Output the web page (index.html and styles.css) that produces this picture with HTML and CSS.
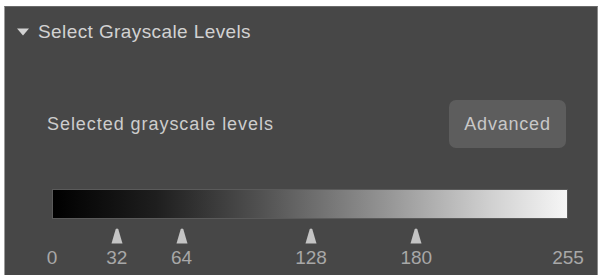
FILE: index.html
```html
<!DOCTYPE html>
<html>
<head>
<meta charset="utf-8">
<link rel="stylesheet" href="styles.css">
</head>
<body>
<div class="panel">
  <div class="header">
    <svg class="caret" width="12" height="8" viewBox="0 0 12 8"><path d="M0 0.5 L12 0.5 L6 7.5 Z" fill="#d2d2d2"/></svg>
    <span class="title">Select Grayscale Levels</span>
  </div>
  <div class="row">
    <span class="label">Selected grayscale levels</span>
    <button class="adv">Advanced</button>
  </div>
  <div class="scale">
    <div class="bar"></div>
    <div class="ticks">
      <div class="marker" style="left:12.55%"><svg width="12" height="16" viewBox="0 0 12 16"><path d="M4.6 1.5 Q6 -0.5 7.4 1.5 L11.5 15.5 L0.5 15.5 Z" fill="#c4c4c4"/></svg></div>
      <div class="marker" style="left:25.1%"><svg width="12" height="16" viewBox="0 0 12 16"><path d="M4.6 1.5 Q6 -0.5 7.4 1.5 L11.5 15.5 L0.5 15.5 Z" fill="#c4c4c4"/></svg></div>
      <div class="marker" style="left:50.2%"><svg width="12" height="16" viewBox="0 0 12 16"><path d="M4.6 1.5 Q6 -0.5 7.4 1.5 L11.5 15.5 L0.5 15.5 Z" fill="#c4c4c4"/></svg></div>
      <div class="marker" style="left:70.6%"><svg width="12" height="16" viewBox="0 0 12 16"><path d="M4.6 1.5 Q6 -0.5 7.4 1.5 L11.5 15.5 L0.5 15.5 Z" fill="#c4c4c4"/></svg></div>
      <span class="num" style="left:0%">0</span>
      <span class="num" style="left:12.55%">32</span>
      <span class="num" style="left:25.1%">64</span>
      <span class="num" style="left:50.2%">128</span>
      <span class="num" style="left:70.6%">180</span>
      <span class="num" style="left:100%">255</span>
    </div>
  </div>
</div>
</body>
</html>
```
FILE: styles.css
```css
html, body {
  margin: 0;
  padding: 0;
  background: #ffffff;
}
body {
  font-family: "Liberation Sans", Arial, sans-serif;
}
.panel {
  box-sizing: border-box;
  margin: 6px 0 0 4px;
  width: 594px;
  height: 269px;
  background: #474747;
  border-left: 1px solid #9a9a9a;
  border-right: 1px solid #8a8a8a;
  border-top: 1px solid #6a6a6a;
  display: flex;
  flex-direction: column;
}
.header {
  height: 49px;
  display: flex;
  align-items: center;
  padding-left: 12px;
  gap: 9px;
}
.caret {
  display: block;
}
.title {
  color: #d2d2d2;
  font-size: 19px;
  letter-spacing: 0.4px;
}
.row {
  margin-top: 44px;
  height: 48px;
  display: flex;
  align-items: center;
  justify-content: space-between;
  padding: 0 31px 0 42px;
}
.label {
  color: #cdcdcd;
  font-size: 18px;
  letter-spacing: 0.95px;
}
.adv {
  width: 117px;
  height: 48px;
  border: none;
  border-radius: 7px;
  background: #5d5d5d;
  color: #c8c8c8;
  font-family: "Liberation Sans", Arial, sans-serif;
  font-size: 18px;
  letter-spacing: 0.8px;
  padding: 0;
}
.scale {
  margin: 41px 29px 0 47px;
}
.bar {
  height: 30px;
  background: linear-gradient(to right, #000000 0%, #1e1e1e 20%, #505050 40%, #959595 65%, #d0d0d0 85%, #f6f6f6 100%);
  border: 1px solid #5a5a5a;
  box-sizing: border-box;
}
.ticks {
  position: relative;
  height: 48px;
}
.marker {
  position: absolute;
  top: 9px;
  width: 12px;
  margin-left: -6px;
}
.marker svg {
  display: block;
}
.num {
  position: absolute;
  top: 28px;
  transform: translateX(-50%);
  color: #a8a8a8;
  font-size: 19px;
  line-height: 22px;
}
```
